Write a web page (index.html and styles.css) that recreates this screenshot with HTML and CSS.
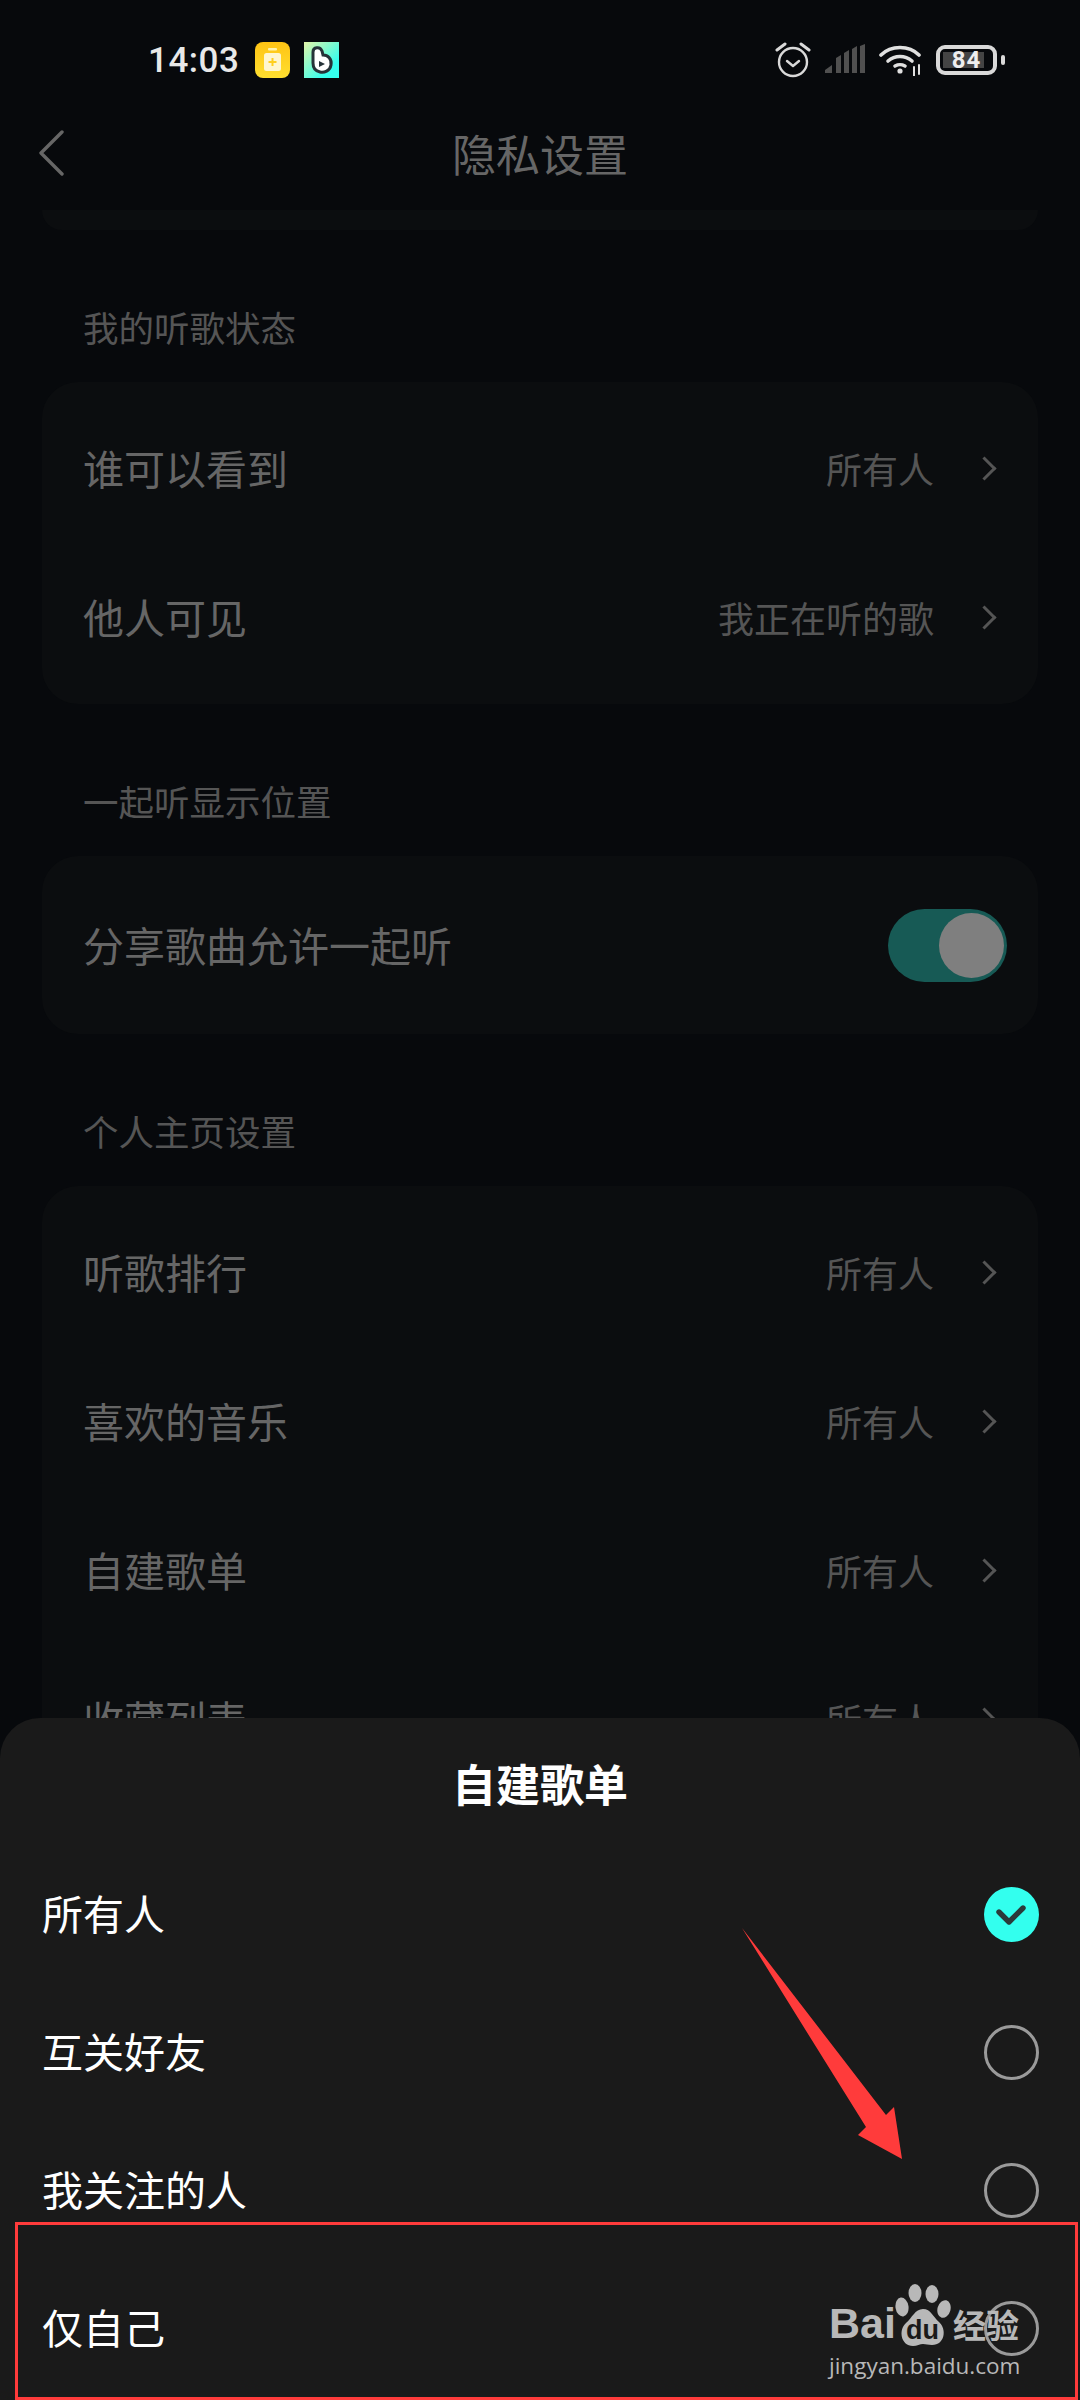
FILE: index.html
```html
<!DOCTYPE html>
<html lang="zh-CN">
<head>
   <meta charset="UTF-8">
   <meta name="viewport" content="width=device-width, initial-scale=1.0">
   <title>隐私设置</title>
   <link rel="stylesheet" href="styles.css">
</head>
<body>
   <div class="page">
       <div class="status-bar">
           <div class="status-left">
               <span class="status-time">14:03</span>
               <svg class="app-icon" width="35" height="36" viewBox="0 0 35 36">
                   <defs>
                       <linearGradient id="yellow" x1="0" y1="0" x2="0" y2="1">
                           <stop offset="0" stop-color="#ffc414"/>
                           <stop offset="1" stop-color="#ffdf30"/>
                       </linearGradient>
                   </defs>
                   <rect width="35" height="36" rx="8" fill="url(#yellow)"/>
                   <rect x="13" y="6" width="9" height="2.5" rx="1" fill="#fff3b0"/>
                   <rect x="9" y="11" width="17" height="18" rx="2.5" fill="#fff6cf"/>
                   <path d="M17.5 16v8M13.5 20h8" stroke="#ffcf20" stroke-width="2"/>
               </svg>
               <svg class="app-icon" width="35" height="36" viewBox="0 0 35 36">
                   <defs>
                       <linearGradient id="mint" x1="0" y1="0" x2="1" y2="1">
                           <stop offset="0" stop-color="#e4f5a8"/>
                           <stop offset="0.75" stop-color="#35ffee"/>
                       </linearGradient>
                   </defs>
                   <rect width="35" height="36" fill="url(#mint)"/>
                   <path d="M9 10c0-5 7-6 9-1l1 4c5 0 9 4 8 10-1 6-7 8-11 7-5-1-7-4-7-9z" fill="#fff" stroke="#263238" stroke-width="3"/>
                   <path d="M15 19l6 3-6 3z" fill="#263238"/>
               </svg>
           </div>
           <div class="status-right">
               <svg width="36" height="38" viewBox="0 0 36 38" fill="none" stroke="#d9d9d9" stroke-width="2.4">
                   <circle cx="18" cy="21" r="14"/>
                   <path d="M12 20l6 5 6-5" stroke-linecap="round" stroke-linejoin="round"/>
                   <path d="M2 9l8-6M34 9l-8-6" stroke-width="3" stroke-linecap="round"/>
               </svg>
               <svg class="signal" width="42" height="30" viewBox="0 0 42 30" fill="#505050">
                   <path d="M1 29v-3l7-5v8z"/>
                   <path d="M12 29V14l5-3v18z"/>
                   <path d="M20 29V9l5-3v23z"/>
                   <path d="M28 29V5l5-3v27z"/>
                   <path d="M36 29V2l5-2v29z"/>
               </svg>
               <svg class="wifi" width="44" height="32" viewBox="0 0 44 32" fill="none" stroke="#e0e0e0" stroke-width="3.6" stroke-linecap="round">
                   <path d="M2 11C12 1 30 1 40 11"/>
                   <path d="M9 17c7-6 17-6 24 0"/>
                   <path d="M16 22c4-2 6-2 10 0"/>
                   <circle cx="21" cy="27" r="1.6" fill="#e0e0e0" stroke-width="2"/>
                   <path d="M35 23v9M40 21v9" stroke-width="2"/>
               </svg>
               <div class="battery"><span class="battery-level">84</span></div>
           </div>
       </div>

       <div class="header">
           <svg class="back-icon" width="26" height="46" viewBox="0 0 26 46" fill="none" stroke="#666" stroke-width="3.4" stroke-linecap="round" stroke-linejoin="round">
               <path d="M24 2L3 23l21 21"/>
           </svg>
           <span class="header-title">隐私设置</span>
       </div>

       <div class="card card-peek"></div>

       <div class="section-label">我的听歌状态</div>
       <div class="card card-list">
           <div class="row"><span class="row-name">谁可以看到</span><span class="row-value">所有人</span><span class="chevron"></span></div>
           <div class="row"><span class="row-name">他人可见</span><span class="row-value">我正在听的歌</span><span class="chevron"></span></div>
       </div>

       <div class="section-label">一起听显示位置</div>
       <div class="card">
           <div class="row row-switch">
               <span class="row-name">分享歌曲允许一起听</span>
               <div class="switch"><div class="switch-thumb"></div></div>
           </div>
       </div>

       <div class="section-label">个人主页设置</div>
       <div class="card card-list">
           <div class="row"><span class="row-name">听歌排行</span><span class="row-value">所有人</span><span class="chevron"></span></div>
           <div class="row"><span class="row-name">喜欢的音乐</span><span class="row-value">所有人</span><span class="chevron"></span></div>
           <div class="row"><span class="row-name">自建歌单</span><span class="row-value">所有人</span><span class="chevron"></span></div>
           <div class="row"><span class="row-name">收藏列表</span><span class="row-value">所有人</span><span class="chevron"></span></div>
       </div>

       <!-- Нижняя панель -->
       <div class="sheet">
           <div class="sheet-title">自建歌单</div>
           <div class="option">
               <span class="option-name">所有人</span>
               <svg class="radio-on" width="55" height="55" viewBox="0 0 55 55">
                   <circle cx="27.5" cy="27.5" r="27.5" fill="#33ffee"/>
                   <path d="M15 25l10 10 14-14" fill="none" stroke="#2b3a3a" stroke-width="5.4" stroke-linecap="round" stroke-linejoin="round"/>
               </svg>
           </div>
           <div class="option"><span class="option-name">互关好友</span><div class="radio"></div></div>
           <div class="option"><span class="option-name">我关注的人</span><div class="radio"></div></div>
           <div class="option"><span class="option-name">仅自己</span><div class="radio"></div></div>
       </div>

       <!-- Пометки поверх скриншота -->
       <svg class="mark-arrow" width="170" height="240" viewBox="0 0 170 240">
           <path d="M0 0L144 187 152 179 160 231 116 207 124 199z" fill="#ff3b3b"/>
       </svg>
       <div class="mark-box"></div>

       <div class="watermark">
           <div class="watermark-logo">
               <span class="logo-bai">Bai</span>
               <div class="logo-paw">
                   <svg width="56" height="62" viewBox="0 0 56 62" fill="#b8b8b8">
                       <ellipse cx="7" cy="23" rx="6.500" ry="9.500" transform="rotate(-8 7 23)"/>
                       <ellipse cx="20" cy="9" rx="6.500" ry="9"/>
                       <ellipse cx="37" cy="10" rx="6.500" ry="9"/>
                       <ellipse cx="49" cy="25" rx="6.500" ry="9" transform="rotate(15 49 25)"/>
                       <path d="M28 25c8 0 10 8 16 13 8 7 6 23-7 23-4 0-6-1-9-1s-6 2-10 2C6 62 3 46 11 39c6-5 9-14 17-14z"/>
                   </svg>
                   <span class="logo-du">du</span>
               </div>
               <span class="logo-jy">经验</span>
           </div>
           <div class="watermark-url">jingyan.baidu.com</div>
       </div>
   </div>
</body>
</html>
```

FILE: styles.css
```css
body {
    margin: 0;
    background-color: #07090c;
    font-family: "Noto Sans CJK SC", "Noto Sans", sans-serif;
}

.page {
    position: relative;
    width: 1080px;
    height: 2400px;
    overflow: hidden;
    background: #07090c;
}

/* Статус-бар */
.status-bar {
    height: 96px;
    padding: 24px 76px 0 148px;
    box-sizing: border-box;
    display: flex;
    justify-content: space-between;
    align-items: center;
}

.status-left {
    display: flex;
    align-items: center;
    gap: 14px;
}

.status-time {
    font-family: Roboto, sans-serif;
    font-weight: 500;
    font-size: 35px;
    letter-spacing: 0.5px;
    color: #e8e8e8;
    margin-right: 2px;
}

.status-right {
    display: flex;
    align-items: center;
    gap: 13px;
}

.signal {
    margin-top: -2px;
}

.battery {
    position: relative;
    width: 61px;
    height: 30px;
    box-sizing: border-box;
    border: 4px solid #d9d9d9;
    border-radius: 9px;
    margin-right: 7px;
    display: flex;
    align-items: center;
    justify-content: center;
    background: linear-gradient(#444, #444) 3px 3px / 41px 16px no-repeat;
}

.battery::after {
    content: "";
    position: absolute;
    right: -12px;
    top: 6px;
    width: 4px;
    height: 10px;
    border-radius: 2px;
    background: #d9d9d9;
}

.battery-level {
    font-family: Roboto, sans-serif;
    font-weight: 700;
    font-size: 24px;
    letter-spacing: 1px;
    color: #eee;
    line-height: 22px;
}

/* Шапка */
.header {
    position: relative;
    height: 114px;
    display: flex;
    align-items: center;
    justify-content: center;
}

.back-icon {
    position: absolute;
    left: 38px;
    top: 34px;
}

.header-title {
    font-size: 44px;
    color: #666;
    line-height: 60px;
}

/* Карточки */
.card {
    margin: 0 42px;
    background: #0b0d0f;
    border-radius: 36px;
}

.card-peek {
    height: 20px;
    border-radius: 0 0 36px 36px;
}

.card-list {
    padding: 12px 0 12px;
}

.section-label {
    padding: 76px 41px 34px 83px;
    font-size: 35.5px;
    line-height: 42px;
    color: #555;
}

.row {
    height: 149px;
    padding: 0 38px 0 41px;
    display: flex;
    align-items: center;
}

.row-switch {
    height: 178px;
    padding-right: 31px;
    justify-content: space-between;
}

.row-name {
    font-size: 41px;
    color: #666;
    flex: 1;
    padding-bottom: 3px;
}

.row-value {
    font-size: 36px;
    color: #555;
    margin-right: 42px;
    padding-bottom: 2px;
}

.chevron {
    width: 14px;
    height: 14px;
    margin-right: 7px;
    border-top: 3px solid #555;
    border-right: 3px solid #555;
    transform: rotate(45deg);
}

.switch {
    width: 119px;
    height: 73px;
    border-radius: 37px;
    background: #175a55;
    padding: 4px 3px 4px 51px;
    box-sizing: border-box;
}

.switch-thumb {
    width: 65px;
    height: 65px;
    border-radius: 50%;
    background: #7f7f7f;
}

/* Нижняя панель */
.sheet {
    position: absolute;
    left: 0;
    right: 0;
    top: 1718px;
    bottom: 0;
    background: #1a1a1a;
    border-radius: 40px 40px 0 0;
}

.sheet-title {
    height: 127px;
    padding-top: 3px;
    box-sizing: border-box;
    display: flex;
    align-items: center;
    justify-content: center;
    font-size: 44px;
    font-weight: 700;
    color: #fff;
}

.option {
    height: 138px;
    padding: 0 41px 0 42px;
    display: flex;
    align-items: center;
    justify-content: space-between;
    font-size: 41px;
    line-height: 55px;
    color: #fff;
}

.option-name {
    padding-bottom: 3px;
}

.radio {
    width: 55px;
    height: 55px;
    box-sizing: border-box;
    border: 3px solid #9a9a9a;
    border-radius: 50%;
}

/* Пометки */
.mark-arrow {
    position: absolute;
    left: 742px;
    top: 1928px;
}

.mark-box {
    position: absolute;
    left: 15px;
    top: 2222px;
    width: 1063px;
    height: 178px;
    box-sizing: border-box;
    border: 3px solid #ff3b3b;
}

.watermark {
    position: absolute;
    left: 829px;
    top: 2284px;
    width: 196px;
    color: #b8b8b8;
}

.watermark-logo {
    display: flex;
    align-items: flex-end;
    height: 62px;
}

.logo-bai {
    font-family: "Liberation Sans", sans-serif;
    font-weight: 700;
    font-size: 43px;
    line-height: 46px;
    width: 66px;
}

.logo-paw {
    position: relative;
    width: 58px;
    height: 62px;
}

.logo-du {
    position: absolute;
    left: 11px;
    top: 31px;
    font-family: "Liberation Sans", sans-serif;
    font-weight: 700;
    font-size: 27px;
    line-height: 30px;
    color: #1a1a1a;
}

.logo-jy {
    font-weight: 700;
    font-size: 33px;
    line-height: 44px;
    white-space: nowrap;
}

.watermark-url {
    font-family: "Open Sans", sans-serif;
    font-size: 22.5px;
    line-height: 28px;
    margin-top: 6px;
    white-space: nowrap;
}
```
